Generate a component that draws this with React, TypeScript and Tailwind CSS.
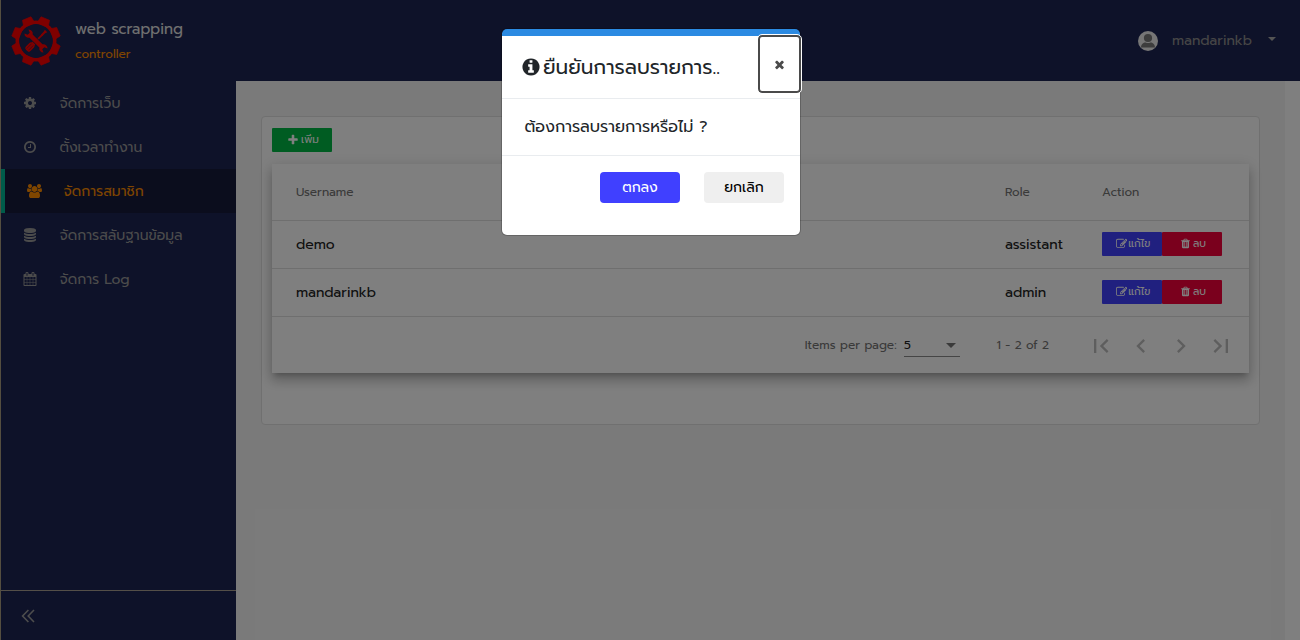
import type { ReactNode } from "react";

const paths = {
  cog: "M1152 896q0-106-75-181t-181-75-181 75-75 181 75 181 181 75 181-75 75-181zm512-109v222q0 12-8 23t-20 13l-185 28q-19 54-39 91 35 50 107 138 10 12 10 25t-9 23q-27 37-99 108t-94 71q-12 0-26-9l-138-108q-44 23-91 38-16 136-29 186-7 28-36 28h-222q-14 0-24.5-8.5t-11.5-21.5l-28-184q-49-16-90-37l-141 107q-10 9-25 9-14 0-25-11-126-114-165-168-7-10-7-23 0-12 8-23 15-21 51-66.5t54-70.5q-27-50-41-99l-183-27q-13-2-21-12.5t-8-23.5v-222q0-12 8-23t19-13l186-28q14-46 39-92-40-57-107-138-10-12-10-24 0-10 9-23 26-36 98.5-107.5t94.5-71.5q13 0 26 10l138 107q44-23 91-38 16-136 29-186 7-28 36-28h222q14 0 24.5 8.5t11.5 21.5l28 184q49 16 90 37l142-107q9-9 24-9 13 0 25 10 129 119 165 170 7 8 7 22 0 12-8 23-15 21-51 66.5t-54 70.5q26 50 41 98l183 28q13 2 21 12.5t8 23.5z",
  clock: "M1024 544v448q0 14-9 23t-23 9h-320q-14 0-23-9t-9-23v-64q0-14 9-23t23-9h224v-352q0-14 9-23t23-9h64q14 0 23 9t9 23zm416 352q0-148-73-273t-198-198-273-73-273 73-198 198-73 273 73 273 198 198 273 73 273-73 198-198 73-273zm224 0q0 209-103 385.5t-279.5 279.5-385.5 103-385.5-103-279.5-279.5-103-385.5 103-385.5 279.5-279.5 385.5-103 385.5 103 279.5 279.5 103 385.5z",
  users: "M593 896q-162 5-265 128h-134q-82 0-138-40.5t-56-118.5q0-353 124-353 6 0 43.5 21t97.5 42.5 119 21.5q67 0 133-23-5 37-5 66 0 139 81 256zm1071 637q0 120-73 189.5t-194 69.5h-874q-121 0-194-69.5t-73-189.5q0-53 3.5-103.5t14-109 26.5-108.5 43-97.5 62-81 85.5-53.5 111.5-20q10 0 43 21.5t73 48 107 48 135 21.5 135-21.5 107-48 73-48 43-21.5q61 0 111.5 20t85.5 53.5 62 81 43 97.5 26.5 108.5 14 109 3.5 103.5zm-1024-1277q0 106-75 181t-181 75-181-75-75-181 75-181 181-75 181 75 75 181zm704 384q0 159-112.5 271.5t-271.5 112.5-271.5-112.5-112.5-271.5 112.5-271.5 271.5-112.5 271.5 112.5 112.5 271.5zm576 225q0 78-56 118.5t-138 40.5h-134q-103-123-265-128 81-117 81-256 0-29-5-66 66 23 133 23 59 0 119-21.5t97.5-42.5 43.5-21q124 0 124 353zm-128-609q0 106-75 181t-181 75-181-75-75-181 75-181 181-75 181 75 75 181z",
  database: "M896 768q237 0 443-43t325-127v170q0 69-103 128t-280 93.5-385 34.5-385-34.5-280-93.5-103-128v-170q119 84 325 127t443 43zm0 768q237 0 443-43t325-127v170q0 69-103 128t-280 93.5-385 34.5-385-34.5-280-93.5-103-128v-170q119 84 325 127t443 43zm0-384q237 0 443-43t325-127v170q0 69-103 128t-280 93.5-385 34.5-385-34.5-280-93.5-103-128v-170q119 84 325 127t443 43zm0-1152q208 0 385 34.5t280 93.5 103 128v128q0 69-103 128t-280 93.5-385 34.5-385-34.5-280-93.5-103-128v-128q0-69 103-128t280-93.5 385-34.5z",
  calendar: "M192 1664h288v-288h-288v288zm352 0h320v-288h-320v288zm-352-352h288v-320h-288v320zm352 0h320v-320h-320v320zm-352-384h288v-288h-288v288zm736 736h320v-288h-320v288zm-384-736h320v-288h-320v288zm768 736h288v-288h-288v288zm-384-352h320v-320h-320v320zm-352-864v-288q0-13-9.5-22.5t-22.5-9.5h-64q-13 0-22.5 9.5t-9.5 22.5v288q0 13 9.5 22.5t22.5 9.5h64q13 0 22.5-9.5t9.5-22.5zm736 864h288v-320h-288v320zm-384-384h320v-288h-320v288zm384 0h288v-288h-288v288zm32-480v-288q0-13-9.5-22.5t-22.5-9.5h-64q-13 0-22.5 9.5t-9.5 22.5v288q0 13 9.5 22.5t22.5 9.5h64q13 0 22.5-9.5t9.5-22.5zm384-64v1280q0 52-38 90t-90 38h-1408q-52 0-90-38t-38-90v-1280q0-52 38-90t90-38h128v-96q0-66 47-113t113-47h64q66 0 113 47t47 113v96h384v-96q0-66 47-113t113-47h64q66 0 113 47t47 113v96h128q52 0 90 38t38 90z",
  info: "M1152 1376v-160q0-14-9-23t-23-9h-96v-512q0-14-9-23t-23-9h-320q-14 0-23 9t-9 23v160q0 14 9 23t23 9h96v320h-96q-14 0-23 9t-9 23v160q0 14 9 23t23 9h448q14 0 23-9t9-23zm-128-896v-160q0-14-9-23t-23-9h-192q-14 0-23 9t-9 23v160q0 14 9 23t23 9h192q14 0 23-9t9-23zm640 416q0 209-103 385.5t-279.5 279.5-385.5 103-385.5-103-279.5-279.5-103-385.5 103-385.5 279.5-279.5 385.5-103 385.5 103 279.5 279.5 103 385.5z",
  plus: "M1600 736v192q0 40-28 68t-68 28h-416v416q0 40-28 68t-68 28h-192q-40 0-68-28t-28-68v-416h-416q-40 0-68-28t-28-68v-192q0-40 28-68t68-28h416v-416q0-40 28-68t68-28h192q40 0 68 28t28 68v416h416q40 0 68 28t28 68z",
  times: "M1490 1322q0 40-28 68l-136 136q-28 28-68 28t-68-28l-294-294-294 294q-28 28-68 28t-68-28l-136-136q-28-28-28-68t28-68l294-294-294-294q-28-28-28-68t28-68l136-136q28-28 68-28t68 28l294 294 294-294q28-28 68-28t68 28l136 136q28 28 28 68t-28 68l-294 294 294 294q28 28 28 68z",
  trash: "M704 1376v-704q0-14-9-23t-23-9h-64q-14 0-23 9t-9 23v704q0 14 9 23t23 9h64q14 0 23-9t9-23zm256 0v-704q0-14-9-23t-23-9h-64q-14 0-23 9t-9 23v704q0 14 9 23t23 9h64q14 0 23-9t9-23zm256 0v-704q0-14-9-23t-23-9h-64q-14 0-23 9t-9 23v704q0 14 9 23t23 9h64q14 0 23-9t9-23zm-544-992h448l-48-117q-7-9-17-11h-317q-10 2-17 11zm928 32v64q0 14-9 23t-23 9h-96v948q0 83-47 143.5t-113 60.5h-832q-66 0-113-58.5t-47-141.5v-952h-96q-14 0-23-9t-9-23v-64q0-14 9-23t23-9h309l70-167q15-37 54-63t79-26h320q40 0 79 26t54 63l70 167h309q14 0 23 9t9 23z",
  edit: "M888 1184l116-116-152-152-116 116v56h96v96h56zm440-720q-16-16-33 1l-350 350q-17 17-1 33t33-1l350-350q17-17 1-33zm80 594v190q0 119-84.5 203.5t-203.5 84.5h-832q-119 0-203.5-84.5t-84.5-203.5v-832q0-119 84.5-203.5t203.5-84.5h832q63 0 117 25 15 7 18 23 3 17-9 29l-49 49q-14 14-32 8-23-6-45-6h-832q-66 0-113 47t-47 113v832q0 66 47 113t113 47h832q66 0 113-47t47-113v-126q0-13 9-22l64-64q15-15 35-7t20 29zm-96-738l288 288-672 672h-288v-288zm444 132l-92 92-288-288 92-92q28-28 68-28t68 28l152 152q28 28 28 68t-28 68z",
};

type IconName = keyof typeof paths;

function Icon({ name, className }: { name: IconName; className: string }) {
  return (
    <svg viewBox={name === "users" ? "0 0 1920 1792" : "0 0 1792 1792"} fill="currentColor" className={`shrink-0 ${className}`}>
      <path d={paths[name]} />
    </svg>
  );
}

const teeth = [0, 45, 90, 135, 180, 225, 270, 315];

function Logo() {
  return (
    <svg viewBox="-25 -25 50 50" className="size-[50px] shrink-0 text-[#ff0000]" fill="currentColor">
      {teeth.map((a) => (
        <path key={a} transform={`rotate(${a + 22.5})`} d="M-6 -17 L-4.6 -24.3 H4.6 L6 -17Z" stroke="currentColor" strokeWidth="0.6" strokeLinejoin="round" />
      ))}
      <circle r="18.7" fill="none" stroke="currentColor" strokeWidth="3.6" />
      <g transform="rotate(-45) scale(0.95)">
        <rect x="-1" y="-0.9" width="11" height="1.8" />
        <path d="M8.5 -1.1h4l2.5 -.7v3.6l-2.5 -.7h-4z" />
        <rect x="-14" y="-3.4" width="10" height="6.8" rx="2.4" />
        <rect x="-4.6" y="-2.2" width="3" height="4.4" />
        <path d="M-12.5 -1.3h7M-12.5 1.3h7" stroke="#1c2452" strokeWidth="0.5" />
      </g>
      <g transform="rotate(45) scale(0.95)">
        <rect x="-8" y="-3.1" width="16" height="6.2" fill="#1c2452" />
        <path d="M-14.2 -3A4.3 4.3 0 0 1 -7.3 -2.3H7.3A4.3 4.3 0 0 1 14.2 -3L10.8 -1.5V1.5L14.2 3A4.3 4.3 0 0 1 7.3 2.3H-7.3A4.3 4.3 0 0 1 -14.2 3L-10.8 1.5V-1.5Z" />
      </g>
    </svg>
  );
}

const menu: { label: string; icon: IconName; active?: boolean }[] = [
  { label: "จัดการเว็บ", icon: "cog" },
  { label: "ตั้งเวลาทำงาน", icon: "clock" },
  { label: "จัดการสมาชิก", icon: "users", active: true },
  { label: "จัดการสลับฐานข้อมูล", icon: "database" },
  { label: "จัดการ Log", icon: "calendar" },
];

function Sidebar() {
  return (
    <aside className="flex w-[236px] shrink-0 flex-col border-l border-[#a89c80] bg-[#1c2452]">
      <div className="flex h-[81px] pl-2.5 pt-4">
        <Logo />
        <div className="ml-3.5 flex flex-col">
          <span className="mt-px text-[15px] leading-6 text-[#e0e0e0]">web scrapping</span>
          <span className="mt-[3px] text-xs leading-5 text-[#ff8c00]">controller</span>
        </div>
      </div>
      <nav className="flex flex-1 flex-col">
        {menu.map((m) => (
          <a
            key={m.label}
            className={`flex h-11 items-center pl-[22px] text-sm ${m.active ? "border-l-4 border-[#00b894] bg-[#161b3a] text-[#ff8c00]" : "text-[#989898]"}`}
          >
            <span className="flex w-[36.5px] items-center">
              <Icon name={m.icon} className={m.icon === "users" ? "h-3.5 w-[15px]" : "size-3.5"} />
            </span>
            <span className="pt-0.5">{m.label}</span>
          </a>
        ))}
      </nav>
      <div className="flex h-[50px] items-center border-t border-[#a89f90] pl-5 text-[#9a9a9a]">
        <svg viewBox="0 0 14 14" className="size-3.5" fill="none" stroke="currentColor" strokeWidth="1.6">
          <path d="M7.4 1L1.6 7l5.8 6M13 1L7.2 7l5.8 6" />
        </svg>
      </div>
    </aside>
  );
}

function Header() {
  return (
    <header className="flex h-[81px] shrink-0 items-center justify-end bg-[#1c2452] pr-6 text-[#8c8c8c]">
      <svg viewBox="0 0 20 20" className="mr-3.5 size-5">
        <circle cx="10" cy="10" r="10" fill="#ececec" />
        <circle cx="10" cy="7" r="4.1" fill="#7a7a7a" />
        <path d="M3 16.6C3 12.8 5.4 11.6 7.6 11.4q2.4 1.2 4.8 0C14.6 11.6 17 12.8 17 16.6z" fill="#7a7a7a" />
      </svg>
      <span className="mr-4 text-sm">mandarinkb</span>
      <svg viewBox="0 0 8 4" className="mb-1 h-1 w-2" fill="#a8a8a8">
        <path d="M0 0h8L4 4z" />
      </svg>
    </header>
  );
}

function SmallButton({ color, children }: { color: string; children: ReactNode }) {
  return (
    <button className={`flex h-6 w-[60px] items-center justify-center rounded-[1px] pb-px pl-0.5 text-[10.5px] text-white ${color}`}>{children}</button>
  );
}

const users = [
  { name: "demo", role: "assistant" },
  { name: "mandarinkb", role: "admin" },
];

const columns = "grid grid-cols-[733px_97px_1fr] items-center border-b border-[#dfdfdf]";

function PageButton({ d }: { d: string }) {
  return (
    <button className="flex size-10 items-center justify-center pt-0.5 text-[#bdbdbd]">
      <svg viewBox="0 0 24 24" className="size-7" fill="currentColor">
        <path d={d} />
      </svg>
    </button>
  );
}

function UserTable() {
  return (
    <div className="mt-3 h-[209px] bg-white text-[#222] shadow-[0_5px_5px_-3px_rgba(0,0,0,0.2),0_8px_10px_1px_rgba(0,0,0,0.14),0_3px_14px_2px_rgba(0,0,0,0.12)]">
      <div className={`${columns} h-[57px] text-xs text-[#757575]`}>
        <span className="pl-6">Username</span>
        <span>Role</span>
        <span>Action</span>
      </div>
      {users.map((u) => (
        <div key={u.name} className={`${columns} h-12 text-sm`}>
          <span className="pl-6">{u.name}</span>
          <span>{u.role}</span>
          <span className="flex pb-px">
            <SmallButton color="bg-[#4040ff]">
              <Icon name="edit" className="mr-px size-[11.5px]" />
              แก้ไข
            </SmallButton>
            <SmallButton color="bg-[#f5003a]">
              <Icon name="trash" className="mr-0.5 size-[11px]" />
              ลบ
            </SmallButton>
          </span>
        </div>
      ))}
      <div className="flex h-14 items-center justify-end pr-2 text-xs text-[#757575]">
        <span className="mr-[7.5px]">Items per page:</span>
        <div className="mr-[36.5px] flex h-6 w-14 items-center justify-between border-b border-[#8a8a8a] pr-1 text-[#222]">
          5
          <svg viewBox="0 0 10 5" className="mt-px h-[5px] w-2.5" fill="#757575">
            <path d="M0 0h10L5 5z" />
          </svg>
        </div>
        <span className="mr-8">1 - 2 of 2</span>
        <PageButton d="M18.41 16.59L13.82 12l4.59-4.59L17 6l-6 6 6 6zM6 6h2v12H6z" />
        <PageButton d="M15.41 7.41L14 6l-6 6 6 6 1.41-1.41L10.83 12z" />
        <PageButton d="M10 6L8.59 7.41 13.17 12l-4.58 4.59L10 18l6-6z" />
        <PageButton d="M5.59 7.41L10.18 12l-4.59 4.59L7 18l6-6-6-6zM16 6h2v12h-2z" />
      </div>
    </div>
  );
}

function ConfirmDialog() {
  return (
    <div className="absolute inset-0 flex items-start justify-center bg-black/50 pt-[29px]">
      <div className="mr-[-2px] flex h-[206px] w-[298px] flex-col overflow-visible rounded-[5px] border-t-[7px] border-[#2b8ae2] bg-white text-[#212529] shadow-[0_0_0_1px_rgba(0,0,0,0.2)]">
        <div className="flex h-[63px] shrink-0 items-center border-b border-[#e9ecef] pl-[18.5px] text-xl">
          <Icon name="info" className="mr-[2.5px] size-5" />
          <span>ยืนยันการลบรายการ..</span>
          <button className="-mr-px -mt-[6px] ml-auto flex h-[58px] w-[43px] items-center justify-center rounded-[4px] border-2 border-[#4a4a4a] bg-white text-[#4a4a4a] outline-1 outline-white">
            <Icon name="times" className="size-[13px]" />
          </button>
        </div>
        <div className="flex h-[57px] shrink-0 items-center border-b border-[#e9ecef] pl-[22.5px] text-base">ต้องการลบรายการหรือไม่ ?</div>
        <div className="flex justify-end gap-6 pr-4 pt-4 text-sm">
          <button className="h-[31px] w-20 rounded-[4px] bg-[#4040ff] text-white">ตกลง</button>
          <button className="h-[31px] w-20 rounded-[4px] bg-[#efefef] text-black">ยกเลิก</button>
        </div>
      </div>
    </div>
  );
}

export default function App() {
  return (
    <div className="relative flex h-[640px] w-[1300px] overflow-hidden bg-white font-['Prompt','Noto_Sans',sans-serif] font-normal">
      <Sidebar />
      <div className="flex flex-1 flex-col">
        <Header />
        <div className="flex flex-1">
          <main className="w-[1049px] bg-[#f5f5f5] pl-[25px] pt-[35px]">
            <section className="h-[309px] w-[999px] rounded-[4px] border border-[#e0e0e0] bg-white px-2.5 pt-[11px]">
              <SmallButton color="bg-[#00b844]">
                <Icon name="plus" className="mr-0.5 size-3" />
                เพิ่ม
              </SmallButton>
              <UserTable />
            </section>
          </main>
        </div>
      </div>
      <ConfirmDialog />
    </div>
  );
}
